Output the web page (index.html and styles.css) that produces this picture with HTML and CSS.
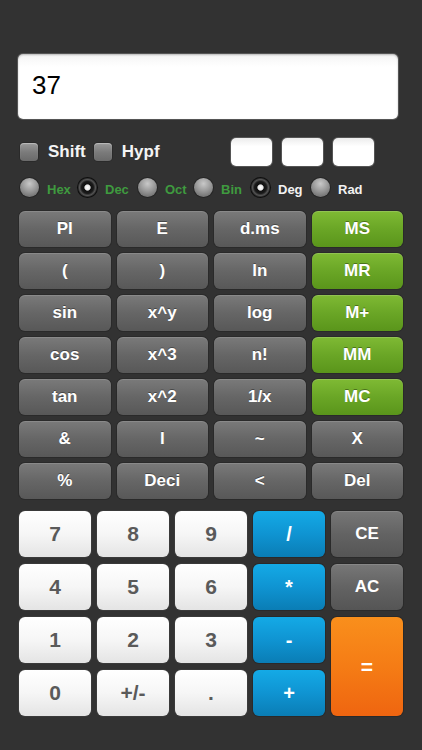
FILE: index.html
```html
<!DOCTYPE html>
<html>
<head>
<meta charset="utf-8">
<link rel="stylesheet" href="styles.css">
</head>
<body>
<div class="app">
  <div class="display"><span class="value">37</span></div>

  <div class="options">
    <div class="check"><span class="box"></span><span class="clabel">Shift</span></div>
    <div class="check"><span class="box"></span><span class="clabel">Hypf</span></div>
    <div class="slots">
      <span class="slot"></span><span class="slot"></span><span class="slot"></span>
    </div>
  </div>

  <div class="radios">
    <div class="radio"><span class="dot"></span><span class="rlabel green">Hex</span></div>
    <div class="radio"><span class="dot on"></span><span class="rlabel green">Dec</span></div>
    <div class="radio"><span class="dot"></span><span class="rlabel green">Oct</span></div>
    <div class="radio"><span class="dot"></span><span class="rlabel green">Bin</span></div>
    <div class="radio"><span class="dot on"></span><span class="rlabel white">Deg</span></div>
    <div class="radio"><span class="dot"></span><span class="rlabel white">Rad</span></div>
  </div>

  <div class="sci">
    <button class="k gray">PI</button><button class="k gray">E</button><button class="k gray">d.ms</button><button class="k green">MS</button>
    <button class="k gray">(</button><button class="k gray">)</button><button class="k gray">ln</button><button class="k green">MR</button>
    <button class="k gray">sin</button><button class="k gray">x^y</button><button class="k gray">log</button><button class="k green">M+</button>
    <button class="k gray">cos</button><button class="k gray">x^3</button><button class="k gray">n!</button><button class="k green">MM</button>
    <button class="k gray">tan</button><button class="k gray">x^2</button><button class="k gray">1/x</button><button class="k green">MC</button>
    <button class="k gray">&amp;</button><button class="k gray">I</button><button class="k gray">~</button><button class="k gray">X</button>
    <button class="k gray">%</button><button class="k gray">Deci</button><button class="k gray">&lt;</button><button class="k gray">Del</button>
  </div>

  <div class="pad">
    <button class="p white">7</button><button class="p white">8</button><button class="p white">9</button><button class="p blue">/</button><button class="p dark">CE</button>
    <button class="p white">4</button><button class="p white">5</button><button class="p white">6</button><button class="p blue">*</button><button class="p dark">AC</button>
    <button class="p white">1</button><button class="p white">2</button><button class="p white">3</button><button class="p blue">-</button><button class="p orange eq">=</button>
    <button class="p white">0</button><button class="p white">+/-</button><button class="p white">.</button><button class="p blue">+</button>
  </div>
</div>
</body>
</html>
```

FILE: styles.css
```css
html, body {
  margin: 0;
  padding: 0;
  background: #323232;
}
body {
  width: 422px;
  height: 750px;
  overflow: hidden;
  font-family: "Liberation Sans", Arial, Helvetica, sans-serif;
}
.app {
  padding: 54px 19px 0 19px;
}
.display {
  margin-left: -1px;
  width: 380px;
  height: 65px;
  background: linear-gradient(#f4f4f4, #ffffff 20%, #ffffff);
  border-radius: 5px;
  box-shadow: 0 0 0 1px #555, inset 0 1px 2px rgba(0,0,0,0.25);
  display: flex;
  align-items: center;
  box-sizing: border-box;
  padding: 0 0 3px 14px;
}
.value {
  font-size: 26px;
  color: #000;
}
.options {
  margin-top: 19px;
  height: 28px;
  display: flex;
  align-items: center;
}
.check {
  display: flex;
  align-items: center;
  margin-right: 7px;
}
.box {
  width: 18px;
  height: 18px;
  margin-left: 1px;
  border-radius: 4px;
  background: linear-gradient(#9a9a9a, #7b7b7b 50%, #6a6a6a);
  box-shadow: inset 0 1px 1px rgba(255,255,255,0.35), 0 0 0 1px #2a2a2a;
}
.clabel {
  margin-left: 10px;
  font-size: 17px;
  font-weight: bold;
  color: #f4f4f4;
}
.slots {
  margin-left: auto;
  margin-right: 29px;
  display: flex;
  gap: 10px;
}
.slot {
  width: 41px;
  height: 28px;
  border-radius: 5px;
  background: linear-gradient(#ececec, #ffffff 30%, #ffffff);
  box-shadow: 0 0 0 1px #555;
}
.radios {
  margin-top: 12px;
  height: 19px;
  display: grid;
  grid-template-columns: 58px 60px 56px 57px 60px auto;
  align-items: center;
}
.radio {
  display: flex;
  align-items: center;
  margin-left: 1px;
}
.dot {
  width: 19px;
  height: 19px;
  border-radius: 50%;
  background: radial-gradient(circle at 50% 30%, #c8c8c8, #9a9a9a 45%, #5e5e5e 100%);
  box-shadow: 0 0 0 1px #262626;
  flex: none;
}
.dot.on {
  background: radial-gradient(circle at 50% 50%, #ffffff 0, #e8e8e8 2.6px, #111 3.6px, #1a1a1a 6px, #555 8px, #222 9.5px);
  box-shadow: 0 0 0 1px #0e0e0e;
}
.rlabel {
  margin-left: 8px;
  font-size: 13px;
  font-weight: bold;
  padding-top: 3px;
}
.green { color: #3f9a3f; }
.rlabel.white { color: #f2f2f2; }

button {
  font-family: inherit;
  border: none;
  margin: 0;
  padding: 0;
  font-weight: bold;
}
.sci {
  margin-top: 14px;
  width: 384px;
  display: grid;
  grid-template-columns: repeat(4, 1fr);
  grid-auto-rows: 36px;
  column-gap: 6px;
  row-gap: 6px;
}
.k {
  border-radius: 6px;
  font-size: 17px;
  color: #fff;
  text-shadow: 0 -1px 0 rgba(0,0,0,0.35);
}
.k.gray {
  background: linear-gradient(#7a7a7a, #666 50%, #585858);
  box-shadow: inset 0 1px 0 rgba(255,255,255,0.12), 0 0 0 1px #2a2a2a;
}
.k.green {
  background: linear-gradient(#7fba34, #6aa626 50%, #5a951b);
  box-shadow: inset 0 1px 0 rgba(255,255,255,0.15), 0 0 0 1px #2a2a2a;
}
.pad {
  margin-top: 12px;
  width: 384px;
  display: grid;
  grid-template-columns: repeat(5, 1fr);
  grid-auto-rows: 46px;
  column-gap: 6px;
  row-gap: 7px;
}
.p {
  border-radius: 6px;
  font-size: 21px;
}
.p.white {
  background: linear-gradient(#ffffff, #f6f6f6 50%, #e4e4e4);
  color: #5a5a5a;
  box-shadow: 0 0 0 1px #3a3a3a;
}
.p.blue {
  background: linear-gradient(#14aae6, #0f94d2 50%, #0a7db5);
  color: #fff;
  font-size: 20px;
  box-shadow: 0 0 0 1px #2a2a2a;
}
.p.dark {
  background: linear-gradient(#777, #636363 50%, #555);
  color: #fff;
  font-size: 17px;
  box-shadow: inset 0 1px 0 rgba(255,255,255,0.12), 0 0 0 1px #2a2a2a;
}
.p.orange {
  background: linear-gradient(#f98f1c, #f57c15 50%, #ef6510);
  color: #fff;
  box-shadow: 0 0 0 1px #2a2a2a;
}
.p.eq {
  grid-column: 5;
  grid-row: 3 / span 2;
}
```
